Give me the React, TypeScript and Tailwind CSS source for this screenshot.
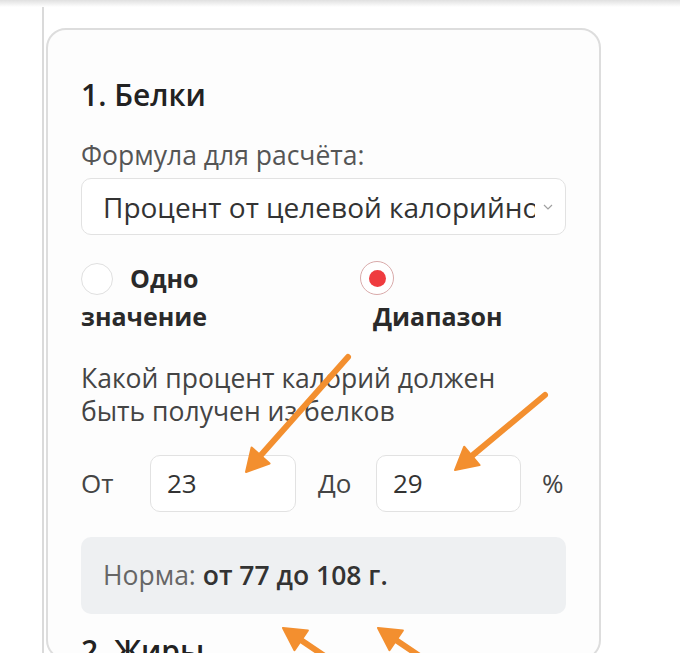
import React from 'react'

const font = { fontFamily: '"Open Sans", "Noto Sans", sans-serif' }

function Arrow({ from, tip, base, left, right }: { from: string; tip: string; base: string; left: string; right: string }) {
  const [x1, y1] = from.split(',')
  const [x2, y2] = base.split(',')
  return (
    <g>
      <line x1={x1} y1={y1} x2={x2} y2={y2} stroke="#f38f2f" strokeWidth="6" strokeLinecap="round" />
      <polygon points={`${tip} ${left} ${right}`} fill="#f38f2f" stroke="#f38f2f" strokeWidth="2" strokeLinejoin="round" />
    </g>
  )
}

export default function App() {
  return (
    <div className="relative w-[680px] h-[653px] overflow-hidden bg-white" style={font}>
      {/* header shadow */}
      <div className="h-[7px] bg-gradient-to-b from-[#e0e0e0] to-white" />

      <div className="flex pl-[42px] h-full">
        <div className="w-[2px] bg-[#dadada] shrink-0" />
        <div className="ml-[2px] mt-[21px] w-[555px] shrink-0 border-2 border-[#dddddd] rounded-[20px] bg-[#fdfdfd] px-[33px] pt-[48px]">
          <h2 className="text-[30px] leading-[34px] font-semibold text-[#222]">1. Белки</h2>

          <div className="mt-[28px] text-[26.5px] leading-[30px] text-[#555]">Формула для расчёта:</div>

          <div className="mt-[8px] h-[57px] flex items-center border border-[#e2e2e2] rounded-[10px] bg-white pl-[21px] pr-[12px]">
            <div className="w-[432px] overflow-hidden whitespace-nowrap text-[28px] font-medium text-[#333]">
              Процент от целевой калорийности
            </div>
            <svg className="ml-auto" width="10" height="6" viewBox="0 0 10 6">
              <path d="M1 1l4 4 4-4" fill="none" stroke="#a0a0a0" strokeWidth="1.2" />
            </svg>
          </div>

          <div className="mt-[24px] flex text-[25px] leading-[38px] font-bold text-[#2a2a2a]">
            <label className="w-[230px]">
              <span className="inline-block align-middle -mt-[4px] mr-[17px] w-[32px] h-[32px] rounded-full border border-[#e0e0e0] bg-white" />
              Одно значение
            </label>
            <label className="ml-[49px] flex flex-col">
              <span className="h-[38px] flex items-center">
                <span className="w-[34px] h-[34px] rounded-full border-[1.5px] border-[#d9aaaa] bg-white flex items-center justify-center">
                  <span className="w-[17px] h-[17px] rounded-full bg-[#ef3b3f]" />
                </span>
              </span>
              <span className="ml-[13px]">Диапазон</span>
            </label>
          </div>

          <p className="mt-[27px] text-[26.5px] leading-[33px] text-[#444]">
            Какой процент калорий должен
            <br />
            быть получен из белков
          </p>

          <div className="mt-[27px] flex items-center text-[26px] text-[#444]">
            <span className="w-[69px]">От</span>
            <div className="w-[146px] h-[57px] flex items-center border border-[#e2e2e2] rounded-[10px] bg-white pl-[16px] text-[#333]">
              23
            </div>
            <span className="w-[80px] pl-[22px]">До</span>
            <div className="w-[145px] h-[57px] flex items-center border border-[#e2e2e2] rounded-[10px] bg-white pl-[16px] text-[#333]">
              29
            </div>
            <span className="ml-[21px]">%</span>
          </div>

          <div className="mt-[25px] h-[77px] flex items-center rounded-[10px] bg-[#eef0f2] pl-[22px] text-[26.5px] text-[#666]">
            Норма:&nbsp;<span className="font-semibold text-[#333]">от 77 до 108 г.</span>
          </div>

          <h2 className="mt-[20px] text-[30px] leading-[34px] font-semibold text-[#222]">2. Жиры</h2>
        </div>
      </div>

      {/* annotation arrows */}
      <svg className="absolute inset-0 pointer-events-none" width="680" height="653" viewBox="0 0 680 653">
        <Arrow from="348,357" base="260.6,455.5" tip="246,472" left="269.6,463.5" right="251.6,447.5" />
        <Arrow from="545,395" base="471.9,455.9" tip="455,470" left="479.6,465.1" right="464.2,446.7" />
        <Arrow from="335,663" base="301.2,640.3" tip="283,628" left="307.9,630.4" right="294.5,650.2" />
        <Arrow from="430,663" base="396.2,640.3" tip="378,628" left="402.9,630.4" right="389.5,650.2" />
      </svg>
    </div>
  )
}
